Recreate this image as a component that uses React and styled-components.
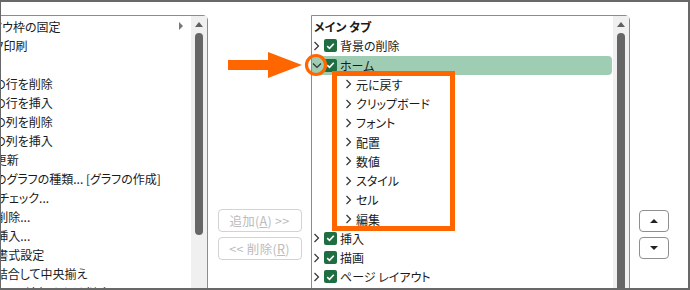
import React from "react";
import styled, { createGlobalStyle } from "styled-components";

const Global = createGlobalStyle`
  html, body { margin: 0; padding: 0; background: #fff; }
  body {
    font-family: "Noto Sans CJK JP", "Noto Sans", sans-serif;
    font-size: 12px;
    color: #1a1a1a;
    font-feature-settings: "palt";
  }
`;

const Frame = styled.div`
  position: relative;
  width: 690px;
  height: 290px;
  box-sizing: border-box;
  overflow: hidden;
  display: flex;
  align-items: flex-start;
  padding-top: 15px;
  background: #fff;
  &::after {
    content: "";
    position: absolute;
    inset: 0;
    border-style: solid;
    border-color: #686868;
    border-width: 2px 2px 2px 1px;
    pointer-events: none;
  }
`;

const ListBox = styled.div`
  box-sizing: border-box;
  display: flex;
  height: 300px;
  border: 1px solid #8c8c8c;
  border-top-right-radius: 5px;
  background: #fff;
  margin-left: ${(p) => p.$shift || 0}px;
  width: ${(p) => p.$w}px;
  flex: none;
`;

const Items = styled.div`
  flex: 1;
  min-width: 0;
  overflow: hidden;
  padding: ${(p) => p.$pad};
`;

const LeftRow = styled.div`
  height: 19px;
  display: flex;
  align-items: center;
  justify-content: space-between;
  white-space: nowrap;
  line-height: 19px;
`;

const SubMark = styled.span`
  width: 0;
  height: 0;
  border-left: 4px solid #777;
  border-top: 4px solid transparent;
  border-bottom: 4px solid transparent;
  margin-right: 8px;
  margin-top: -2px;
`;

const Track = styled.div`
  width: 16px;
  flex: none;
  background: #f0f0f0;
  display: flex;
  flex-direction: column;
  align-items: center;
  padding-top: 6px;
  box-sizing: border-box;
`;

const UpTri = styled.span`
  width: 0;
  height: 0;
  border-left: 4px solid transparent;
  border-right: 4px solid transparent;
  border-bottom: 5px solid #606060;
`;

const Thumb = styled.div`
  margin-top: 6px;
  width: 8px;
  height: ${(p) => p.$h}px;
  border-radius: 4px;
  background: #666;
`;

const Middle = styled.div`
  width: 103px;
  flex: none;
  display: flex;
  flex-direction: column;
  align-items: center;
  gap: 5px;
  padding-top: 194px;
`;

const WideBtn = styled.button`
  box-sizing: border-box;
  width: 84px;
  height: 23px;
  border: 1px solid #d3d3d3;
  border-radius: 4px;
  background: #fff;
  color: #bcbcbc;
  font: inherit;
  font-size: 12.5px;
  font-feature-settings: normal;
  letter-spacing: 0.3px;
  padding: 0;
  display: flex;
  align-items: center;
  justify-content: center;
  white-space: nowrap;
  u { text-decoration: underline; }
`;

const TreeRow = styled.div`
  position: relative;
  height: 19.25px;
  display: flex;
  align-items: center;
  white-space: nowrap;
  padding-left: ${(p) => p.$indent}px;
  background: ${(p) => (p.$sel ? "#9fcdb3" : "transparent")};
  border-radius: ${(p) => (p.$sel ? "0 4px 4px 0" : "0")};
  font-weight: ${(p) => (p.$bold ? 700 : 400)};
  margin-right: 1px;
`;

const Chevron = styled.svg`
  flex: none;
  margin-right: ${(p) => p.$gap}px;
`;

const Check = styled.span`
  flex: none;
  width: 13px;
  height: 13px;
  border-radius: 2px;
  background: #1e6e42;
  display: flex;
  align-items: center;
  justify-content: center;
  margin-right: 3px;
`;

const Label = styled.span`
  line-height: 19px;
`;

const SideCol = styled.div`
  flex: none;
  display: flex;
  flex-direction: column;
  gap: 5px;
  padding-left: 9px;
  padding-top: 195px;
`;

const SmallBtn = styled.button`
  box-sizing: border-box;
  width: 30px;
  height: 22px;
  border: 1px solid #8f8f8f;
  border-radius: 4px;
  background: #fff;
  padding: 0;
  display: flex;
  align-items: center;
  justify-content: center;
`;

const Tri = styled.span`
  width: 0;
  height: 0;
  border-left: 4px solid transparent;
  border-right: 4px solid transparent;
  ${(p) =>
    p.$down
      ? "border-top: 4px solid #222;"
      : "border-bottom: 4px solid #222;"}
`;

const Overlay = styled.svg`
  position: absolute;
  left: 0;
  top: 0;
  pointer-events: none;
`;

const leftItems = [
  ["ウィンドウ枠の固定", true],
  ["クイック印刷"],
  ["コピー"],
  ["シートの行を削除"],
  ["シートの行を挿入"],
  ["シートの列を削除"],
  ["シートの列を挿入"],
  ["すべて更新"],
  ["すべてのグラフの種類... [グラフの作成]"],
  ["スペル チェック..."],
  ["セルの削除..."],
  ["セルの挿入..."],
  ["セルの書式設定"],
  ["セルを結合して中央揃え"],
  ["フィルターの追加または削除"],
];

const RightChev = () => (
  <Chevron width="7" height="10" viewBox="0 0 7 10" $gap={4}>
    <polyline points="1.5,1 5.5,5 1.5,9" fill="none" stroke="#333" strokeWidth="1.2" />
  </Chevron>
);

const DownChev = () => (
  <Chevron width="10" height="7" viewBox="0 0 10 7" $gap={2}>
    <polyline points="1,1.5 5,5.5 9,1.5" fill="none" stroke="#333" strokeWidth="1.2" />
  </Chevron>
);

const CheckBox = () => (
  <Check>
    <svg width="9" height="8" viewBox="0 0 9 8">
      <polyline points="1.2,4.2 3.5,6.3 7.8,1.8" fill="none" stroke="#fff" strokeWidth="1.6" />
    </svg>
  </Check>
);

const sub = ["元に戻す", "クリップボード", "フォント", "配置", "数値", "スタイル", "セル", "編集"];

export default function App() {
  return (
    <>
      <Global />
      <Frame>
        <ListBox $shift={-43} $w={251}>
          <Items $pad="1px 0 0 4px">
            {leftItems.map(([t, more], i) => (
              <LeftRow key={i}>
                <span>{t}</span>
                {more && <SubMark />}
              </LeftRow>
            ))}
          </Items>
          <Track>
            <UpTri />
            <Thumb $h={202} />
          </Track>
        </ListBox>

        <Middle>
          <WideBtn disabled>
            追加(<u>A</u>)&nbsp;&gt;&gt;
          </WideBtn>
          <WideBtn disabled>
            &lt;&lt;&nbsp;削除(<u>R</u>)
          </WideBtn>
        </Middle>

        <ListBox $w={319}>
          <Items $pad="1px 0 0 0">
            <TreeRow $indent={2} $bold>
              <Label>メイン タブ</Label>
            </TreeRow>
            <TreeRow $indent={1}>
              <RightChev />
              <CheckBox />
              <Label>背景の削除</Label>
            </TreeRow>
            <TreeRow $indent={0} $sel>
              <DownChev />
              <CheckBox />
              <Label>ホーム</Label>
            </TreeRow>
            {sub.map((s) => (
              <TreeRow key={s} $indent={33}>
                <RightChev />
                <Label>{s}</Label>
              </TreeRow>
            ))}
            {["挿入", "描画", "ページ レイアウト"].map((s) => (
              <TreeRow key={s} $indent={1}>
                <RightChev />
                <CheckBox />
                <Label>{s}</Label>
              </TreeRow>
            ))}
          </Items>
          <Track>
            <UpTri />
            <Thumb $h={300} />
          </Track>
        </ListBox>

        <SideCol>
          <SmallBtn>
            <Tri />
          </SmallBtn>
          <SmallBtn>
            <Tri $down />
          </SmallBtn>
        </SideCol>

        <Overlay width="690" height="290" viewBox="0 0 690 290">
          <rect x="228" y="60" width="42" height="10" fill="#ff6600" />
          <polygon points="268,52 302,65 268,78" fill="#ff6600" />
          <circle cx="316" cy="65" r="9.5" fill="none" stroke="#ff6600" strokeWidth="3.2" />
          <rect x="334.5" y="73.5" width="118" height="155" fill="none" stroke="#ff6600" strokeWidth="5" />
        </Overlay>
      </Frame>
    </>
  );
}
